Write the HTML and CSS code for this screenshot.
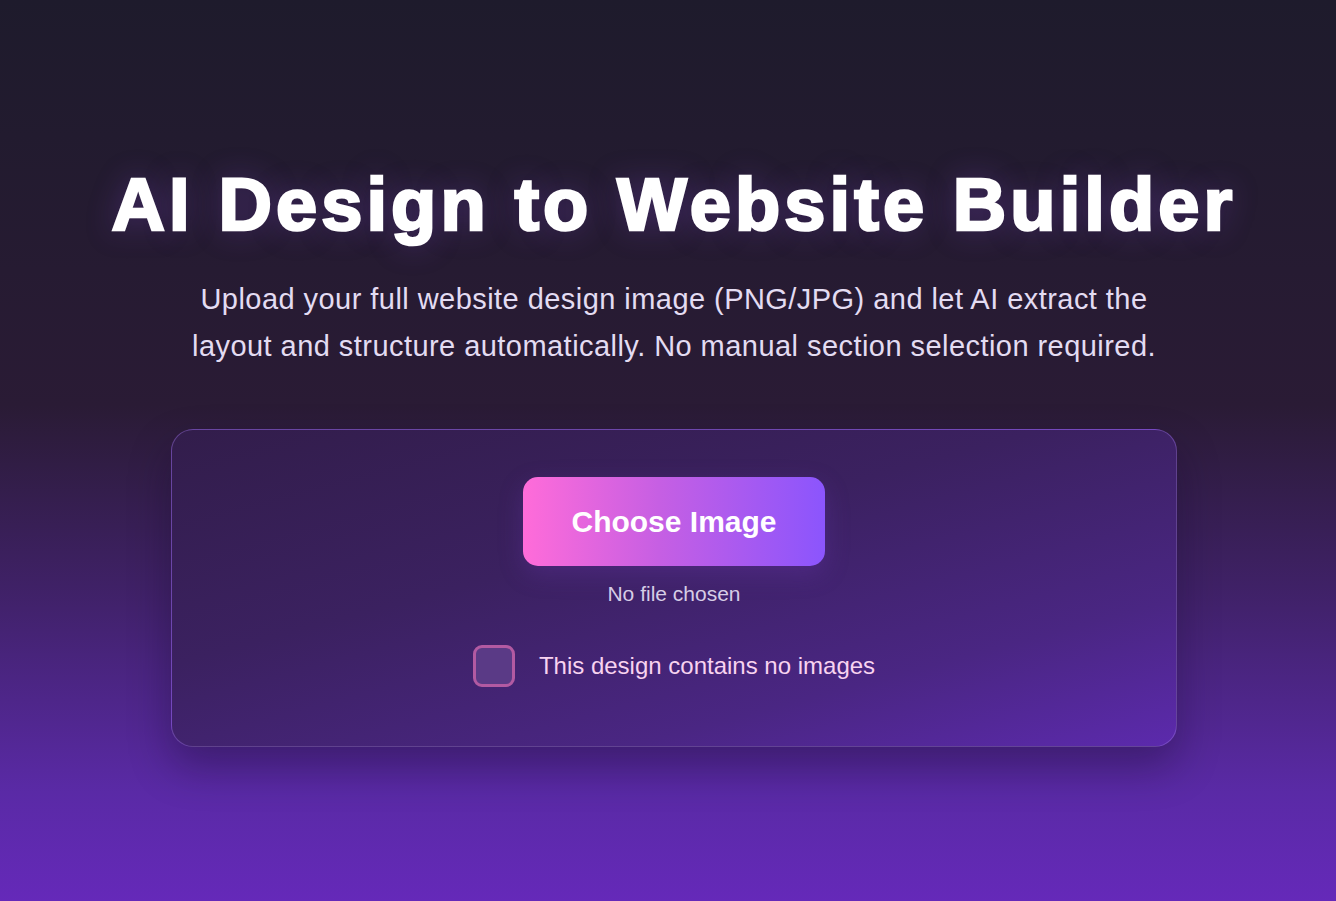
FILE: index.html
```html
<!DOCTYPE html>
<html lang="en">
<head>
<meta charset="utf-8">
<title>AI Design to Website Builder</title>
<link rel="stylesheet" href="styles.css">
</head>
<body>
<main class="page">
  <h1 class="title">AI Design to Website Builder</h1>
  <p class="subtitle">Upload your full website design image (PNG/JPG) and let AI extract the layout and structure automatically. No manual section selection required.</p>
  <section class="card">
    <button class="choose" type="button">Choose Image</button>
    <div class="filename">No file chosen</div>
    <label class="check">
      <span class="box"></span>
      <span class="check-text">This design contains no images</span>
    </label>
  </section>
</main>
</body>
</html>
```
FILE: styles.css
```css
html, body {
  margin: 0;
  height: 100%;
}
body {
  background: linear-gradient(180deg, #1e1b2c 0%, #2a1b35 45%, #3f2166 65%, #5a2aa6 88%, #6529b9 100%);
  font-family: "Liberation Sans", Arial, sans-serif;
  color: #fff;
  overflow: hidden;
}
.page {
  display: flex;
  flex-direction: column;
  align-items: center;
  padding-left: 12px;
  padding-top: 160px;
}
.title {
  margin: 0;
  font-size: 74px;
  font-weight: 700;
  letter-spacing: 4.1px;
  line-height: 90px;
  -webkit-text-stroke: 2.6px #fff;
  text-shadow: 0 0 30px rgba(140, 80, 230, 0.35);
}
.subtitle {
  margin: 26px 0 0;
  width: 1000px;
  text-align: center;
  font-size: 29px;
  letter-spacing: 0.45px;
  line-height: 47px;
  color: #e3dcf2;
}
.card {
  margin-top: 59px;
  width: 1006px;
  height: 318px;
  box-sizing: border-box;
  border: 1px solid rgba(150, 110, 220, 0.45);
  border-radius: 22px;
  background: linear-gradient(165deg, #321d4b 0%, #3b2160 40%, #4a2683 75%, #5c2aad 100%);
  box-shadow: 0 20px 40px rgba(20, 10, 40, 0.35);
  display: flex;
  flex-direction: column;
  align-items: center;
  padding-top: 47px;
}
.choose {
  width: 302px;
  height: 89px;
  border: 0;
  border-radius: 15px;
  background: linear-gradient(90deg, #ff6cd9 0%, #c65fe3 45%, #8b55fd 100%);
  color: #fff;
  font-family: "Liberation Sans", Arial, sans-serif;
  font-weight: 700;
  font-size: 30px;
  box-shadow: 0 8px 24px rgba(120, 60, 200, 0.25);
  cursor: pointer;
}
.filename {
  margin-top: 16px;
  font-size: 21px;
  color: #d6cde6;
}
.check {
  margin-top: 39px;
  display: flex;
  align-items: center;
  gap: 24px;
}
.box {
  width: 42px;
  height: 42px;
  box-sizing: border-box;
  border: 3px solid #b25aa2;
  border-radius: 9px;
  background: #5a3a86;
}
.check-text {
  font-size: 24px;
  color: #f8d3f0;
}
```
